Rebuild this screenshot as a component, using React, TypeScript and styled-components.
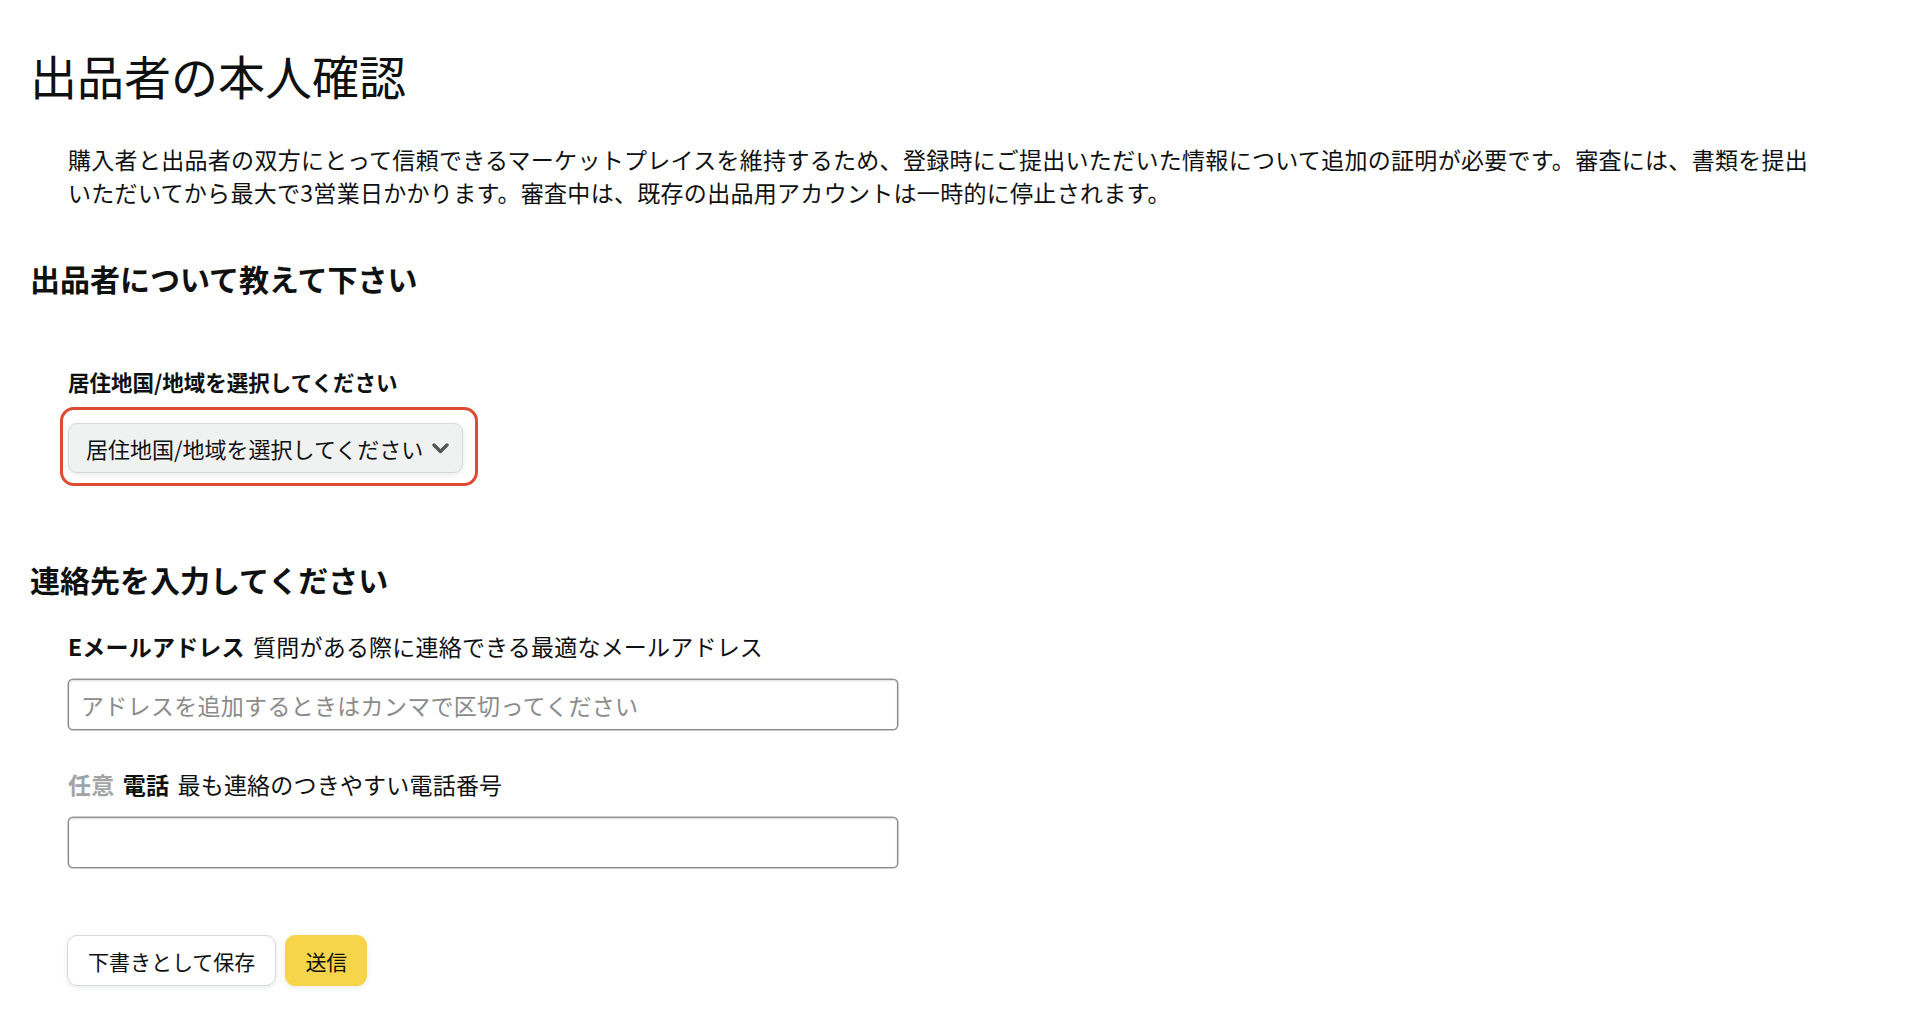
import React from "react";
import styled, { createGlobalStyle } from "styled-components";

const GlobalStyle = createGlobalStyle`
  html, body {
    margin: 0;
    padding: 0;
    background: #ffffff;
  }
  body {
    font-family: "Noto Sans CJK JP", "Noto Sans", sans-serif;
    color: #0f1111;
  }
  * {
    box-sizing: border-box;
  }
`;

const Chevron = () => (
  <svg width="17" height="11" viewBox="0 0 17 11" fill="none">
    <polyline
      points="2,2 8.5,8.5 15,2"
      stroke="#555555"
      strokeWidth="3.4"
      strokeLinecap="round"
      strokeLinejoin="round"
    />
  </svg>
);

const App = () => {
  return (
    <>
      <GlobalStyle />
      <Page>
        <Title>出品者の本人確認</Title>
        <Intro>
          購入者と出品者の双方にとって信頼できるマーケットプレイスを維持するため、登録時にご提出いただいた情報について追加の証明が必要です。審査には、書類を提出いただいてから最大で3営業日かかります。審査中は、既存の出品用アカウントは一時的に停止されます。
        </Intro>

        <SectionTitle $top={51}>出品者について教えて下さい</SectionTitle>
        <Field $top={72}>
          <SmallLabel>居住地国/地域を選択してください</SmallLabel>
          <Highlight>
            <SelectButton type="button">
              <span>居住地国/地域を選択してください</span>
              <Chevron />
            </SelectButton>
          </Highlight>
        </Field>

        <SectionTitle $top={88}>連絡先を入力してください</SectionTitle>
        <Field $top={34}>
          <Label>
            <Strong>Eメールアドレス</Strong> 質問がある際に連絡できる最適なメールアドレス
          </Label>
          <TextInput placeholder="アドレスを追加するときはカンマで区切ってください" />
        </Field>
        <Field $top={39}>
          <Label>
            <Optional>任意</Optional> <Strong>電話</Strong> 最も連絡のつきやすい電話番号
          </Label>
          <TextInput />
        </Field>

        <Actions>
          <Button type="button">下書きとして保存</Button>
          <Button type="button" $primary>
            送信
          </Button>
        </Actions>
      </Page>
    </>
  );
};

export default App;

const Page = styled.main`
  padding: 47px 0 40px 30px;
  display: flex;
  flex-direction: column;
  align-items: flex-start;
`;

const Title = styled.h1`
  margin: 0;
  font-size: 47px;
  line-height: 56px;
  font-weight: 400;
`;

const Intro = styled.p`
  margin: 40px 0 0 38px;
  max-width: 1752px;
  font-size: 23px;
  line-height: 33px;
  letter-spacing: 0.3px;
`;

const SectionTitle = styled.h2<{ $top: number }>`
  margin: ${(p) => p.$top}px 0 0;
  font-size: 30px;
  line-height: 36px;
  font-weight: 700;
`;

const Field = styled.div<{ $top: number }>`
  margin: ${(p) => p.$top}px 0 0 38px;
  display: flex;
  flex-direction: column;
  align-items: flex-start;
  gap: 18px;
`;

const SmallLabel = styled.label`
  font-size: 21.5px;
  line-height: 28px;
  font-weight: 700;
  margin-bottom: 9px;
`;

const Label = styled.label`
  font-size: 23px;
  line-height: 30px;
  letter-spacing: 0.2px;
  word-spacing: 3px;
`;

const Strong = styled.span`
  font-weight: 700;
`;

const Optional = styled.span`
  font-weight: 700;
  color: #a3a3a3;
`;

const Highlight = styled.div`
  position: relative;
  &::after {
    content: "";
    position: absolute;
    top: -16px;
    left: -8px;
    right: -15px;
    bottom: -13px;
    border: 3px solid #de4b33;
    border-radius: 14px;
    pointer-events: none;
  }
`;

const SelectButton = styled.button`
  width: 395px;
  height: 50px;
  display: flex;
  align-items: center;
  justify-content: space-between;
  padding: 0 13px 0 17px;
  background: #f0f2f2;
  border: 1px solid #d5d9d9;
  border-radius: 9px;
  box-shadow: 0 2px 5px 0 rgba(213, 217, 217, 0.5);
  font-family: inherit;
  font-size: 22px;
  color: #0f1111;
  cursor: pointer;
`;

const TextInput = styled.input`
  width: 830px;
  height: 51px;
  padding: 0 12px;
  border: 1px solid #888c8c;
  border-top-color: #949494;
  border-radius: 5px;
  box-shadow: 0 1px 2px rgba(15, 17, 17, 0.15) inset, 0 0 0 0.5px #9a9a9a;
  font-family: inherit;
  font-size: 23px;
  letter-spacing: 0.3px;
  color: #0f1111;
  outline: none;
  &::placeholder {
    color: #8b8b8b;
  }
`;

const Actions = styled.div`
  margin: 67px 0 0 37px;
  display: flex;
  gap: 9px;
`;

const Button = styled.button<{ $primary?: boolean }>`
  height: 51px;
  padding: 0 ${(p) => (p.$primary ? 19 : 20)}px;
  font-family: inherit;
  font-size: 21px;
  color: #0f1111;
  background: ${(p) => (p.$primary ? "#f7d54b" : "#ffffff")};
  border: 1px solid ${(p) => (p.$primary ? "#f5d34a" : "#d5d9d9")};
  border-radius: 10px;
  box-shadow: 0 2px 5px 0 rgba(213, 217, 217, 0.5);
  cursor: pointer;
`;
